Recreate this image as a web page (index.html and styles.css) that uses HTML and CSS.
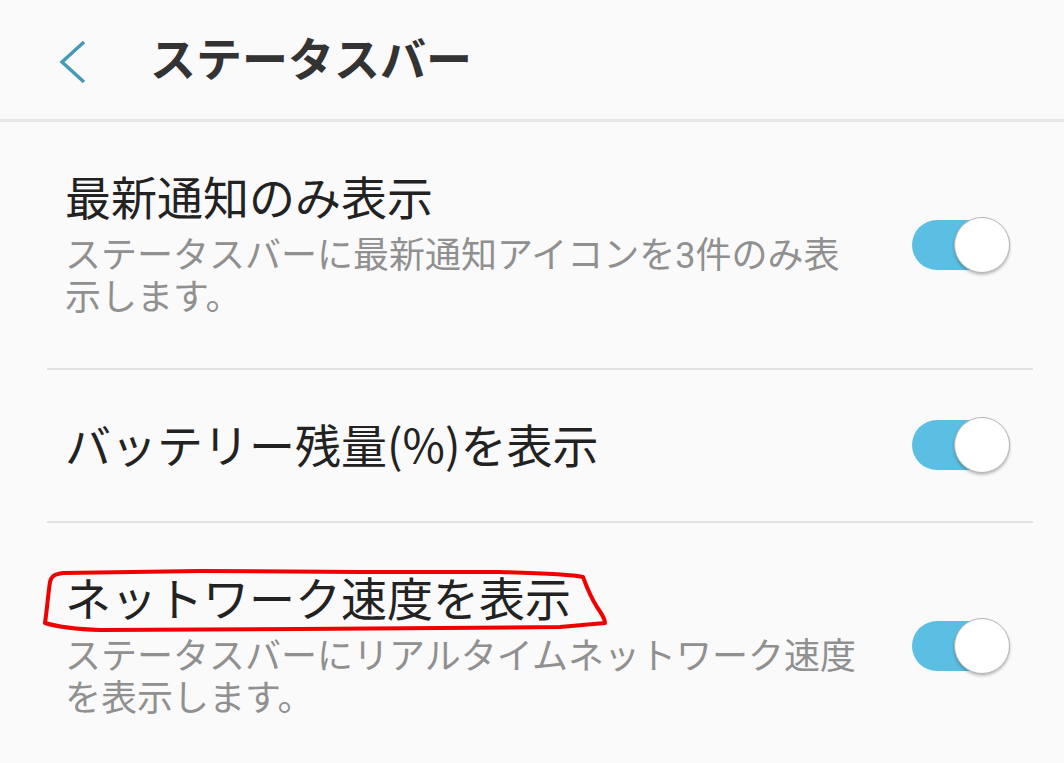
FILE: index.html
```html
<!DOCTYPE html>
<html lang="ja">
<head>
	<meta charset="UTF-8">
	<title>ステータスバー</title>
	<link rel="stylesheet" href="styles.css">
</head>
<body>
	<div class="page">
		<header class="app-bar">
			<button class="back" aria-label="戻る">
				<svg width="40" height="50" viewBox="0 0 40 50">
					<polyline points="33,6 11,26 33,46" fill="none" stroke="#4498b8" stroke-width="3.4" />
				</svg>
			</button>
			<h1>ステータスバー</h1>
		</header>

		<ul class="settings">
			<li class="setting">
				<div class="setting-text">
					<div class="setting-title">最新通知のみ表示</div>
					<div class="setting-desc">ステータスバーに最新通知アイコンを3件のみ表示します。</div>
				</div>
				<div class="switch on"><span class="track"></span><span class="knob"></span></div>
			</li>
			<li class="setting single">
				<div class="setting-text">
					<div class="setting-title">バッテリー残量<span class="cjk">(%)</span>を表示</div>
				</div>
				<div class="switch on"><span class="track"></span><span class="knob"></span></div>
			</li>
			<li class="setting">
				<div class="setting-text">
					<div class="setting-title">ネットワーク速度を表示</div>
					<div class="setting-desc">ステータスバーにリアルタイムネットワーク速度を表示します。</div>
				</div>
				<div class="switch on"><span class="track"></span><span class="knob"></span></div>
			</li>
		</ul>

		<!-- red hand-drawn mark over the third title -->
		<svg class="markup" width="1064" height="763" viewBox="0 0 1064 763">
			<path d="M45 623 C47 610 48 595 50 582 C51 576 55 574 63 573 L200 571 L360 572 L500 572 C540 573 570 574 583 577 C586 585 590 596 597 607 C602 614 605 619 605 623 L560 627 L300 629 L100 630 C70 629 55 626 45 623 Z" fill="none" stroke="#f00000" stroke-width="4" stroke-linejoin="round" />
		</svg>
	</div>
</body>
</html>
```

FILE: styles.css
```css
body {
	margin: 0;
	padding: 0;
	background-color: #fafafa;
	font-family: Roboto, "Noto Sans CJK JP", sans-serif;
}

.page {
	position: relative;
	width: 1064px;
	height: 763px;
	overflow: hidden;
}

.app-bar {
	display: flex;
	align-items: center;
	height: 119px;
	border-bottom: 3px solid #e8e8e8;
	box-sizing: content-box;
}

.back {
	display: flex;
	align-items: center;
	background: none;
	border: none;
	padding: 0;
	margin: 2px 0 0 51px;
	width: 40px;
	height: 50px;
}

.app-bar h1 {
	margin: 0 0 0 59px;
	font-size: 46px;
	font-weight: bold;
	color: #333;
	line-height: 56px;
}

.settings {
	list-style: none;
	margin: 0;
	padding: 0;
}

.setting {
	display: flex;
	align-items: center;
	margin: 0 31px 0 47px;
	padding: 49px 23px 49px 18px;
	border-bottom: 2px solid #e2e2e2;
}

.setting.single {
	padding-top: 45px;
	padding-bottom: 46px;
}

.setting-text {
	width: 800px;
}

.setting-title {
	font-size: 46px;
	line-height: 56px;
	color: #222;
}

.setting-title .cjk {
	font-family: "Noto Sans CJK JP", sans-serif;
}

.setting-desc {
	margin-top: 8px;
	font-size: 36px;
	line-height: 42px;
	color: #909090;
}

.switch {
	position: relative;
	margin-left: auto;
	width: 98px;
	height: 56px;
}

.switch .track {
	position: absolute;
	left: 0;
	top: 3px;
	width: 88px;
	height: 50px;
	border-radius: 25px;
	background-color: #5bbfe3;
}

.switch .knob {
	position: absolute;
	right: 0;
	top: 0;
	width: 54px;
	height: 54px;
	border-radius: 50%;
	background-color: #fff;
	border: 1px solid #b4b4b4;
	box-shadow: 0 2px 3px rgba(0,0,0,0.25);
}

.markup {
	position: absolute;
	left: 0;
	top: 0;
	pointer-events: none;
}
```
